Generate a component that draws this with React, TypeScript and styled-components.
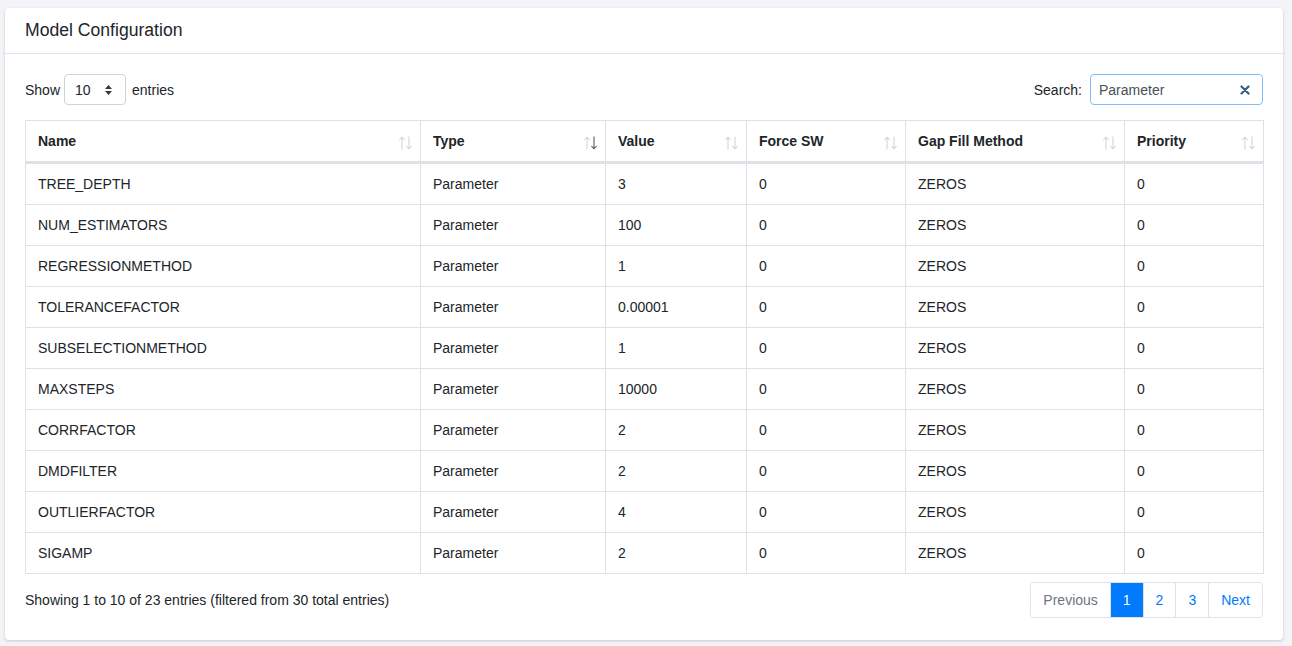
import React from "react";
import styled, { createGlobalStyle } from "styled-components";

const GlobalStyle = createGlobalStyle`
  * { box-sizing: border-box; }
  body {
    margin: 0;
    background: #f3f4f8;
    font-family: "Liberation Sans", Arial, sans-serif;
    font-size: 14px;
    color: #212529;
  }
`;

type Row = {
  name: string;
  type: string;
  value: string;
  force: string;
  gap: string;
  priority: string;
};

const rows: Row[] = [
  { name: "TREE_DEPTH", type: "Parameter", value: "3", force: "0", gap: "ZEROS", priority: "0" },
  { name: "NUM_ESTIMATORS", type: "Parameter", value: "100", force: "0", gap: "ZEROS", priority: "0" },
  { name: "REGRESSIONMETHOD", type: "Parameter", value: "1", force: "0", gap: "ZEROS", priority: "0" },
  { name: "TOLERANCEFACTOR", type: "Parameter", value: "0.00001", force: "0", gap: "ZEROS", priority: "0" },
  { name: "SUBSELECTIONMETHOD", type: "Parameter", value: "1", force: "0", gap: "ZEROS", priority: "0" },
  { name: "MAXSTEPS", type: "Parameter", value: "10000", force: "0", gap: "ZEROS", priority: "0" },
  { name: "CORRFACTOR", type: "Parameter", value: "2", force: "0", gap: "ZEROS", priority: "0" },
  { name: "DMDFILTER", type: "Parameter", value: "2", force: "0", gap: "ZEROS", priority: "0" },
  { name: "OUTLIERFACTOR", type: "Parameter", value: "4", force: "0", gap: "ZEROS", priority: "0" },
  { name: "SIGAMP", type: "Parameter", value: "2", force: "0", gap: "ZEROS", priority: "0" },
];

const columns = [
  { label: "Name", width: 395, sort: "none" },
  { label: "Type", width: 185, sort: "desc" },
  { label: "Value", width: 141, sort: "none" },
  { label: "Force SW", width: 159, sort: "none" },
  { label: "Gap Fill Method", width: 219, sort: "none" },
  { label: "Priority", width: 139, sort: "none" },
];

// pair of thin arrows used by the sortable headers
function SortArrows({ desc }: { desc?: boolean }) {
  return (
    <SortIcon width="15" height="14" viewBox="0 0 15 14">
      <path d="M4 13.5 V1.2 M1.4 3.9 L4 1.2 L6.6 3.9" stroke="#d3d6da" strokeWidth="1.1" fill="none" />
      <path
        d="M11 0.5 V12.8 M8.4 10.1 L11 12.8 L13.6 10.1"
        stroke={desc ? "#5a5d61" : "#d3d6da"}
        strokeWidth="1.1"
        fill="none"
      />
    </SortIcon>
  );
}

function App() {
  return (
    <>
      <GlobalStyle />
      <Page>
        <Card>
          <CardHeader>
            <Title>Model Configuration</Title>
          </CardHeader>
          <CardBody>
            <Controls>
              <Label>
                Show
                <Select>
                  <span>10</span>
                  <svg width="9" height="12" viewBox="0 0 9 12">
                    <path d="M4.5 1 L8 5 H1 Z" fill="#343a40" />
                    <path d="M4.5 11 L8 7 H1 Z" fill="#343a40" />
                  </svg>
                </Select>
                entries
              </Label>
              <Label>
                Search:
                <SearchBox>
                  <span>Parameter</span>
                  <svg width="10" height="10" viewBox="0 0 10 10">
                    <path d="M1.5 1.5 L8.5 8.5 M8.5 1.5 L1.5 8.5" stroke="#3e5a8a" strokeWidth="2.2" strokeLinecap="round" />
                  </svg>
                </SearchBox>
              </Label>
            </Controls>
            <Table>
              <colgroup>
                {columns.map((c) => (
                  <col key={c.label} style={{ width: c.width }} />
                ))}
              </colgroup>
              <thead>
                <tr>
                  {columns.map((c) => (
                    <Th key={c.label}>
                      {c.label}
                      <SortArrows desc={c.sort === "desc"} />
                    </Th>
                  ))}
                </tr>
              </thead>
              <tbody>
                {rows.map((r) => (
                  <tr key={r.name}>
                    <Td>{r.name}</Td>
                    <Td>{r.type}</Td>
                    <Td>{r.value}</Td>
                    <Td>{r.force}</Td>
                    <Td>{r.gap}</Td>
                    <Td>{r.priority}</Td>
                  </tr>
                ))}
              </tbody>
            </Table>
            <Footer>
              <Info>Showing 1 to 10 of 23 entries (filtered from 30 total entries)</Info>
              <Pagination>
                <PageLink $disabled>Previous</PageLink>
                <PageLink $active>1</PageLink>
                <PageLink>2</PageLink>
                <PageLink>3</PageLink>
                <PageLink>Next</PageLink>
              </Pagination>
            </Footer>
          </CardBody>
        </Card>
      </Page>
    </>
  );
}

export default App;

const Page = styled.div`
  padding: 8px 9px 7px 5px;
`;

const Card = styled.div`
  background: #fff;
  border-radius: 4px;
  box-shadow: 0 1px 3px rgba(0, 0, 0, 0.18);
`;

const CardHeader = styled.div`
  height: 46px;
  padding: 0 20px;
  display: flex;
  align-items: center;
  border-bottom: 1px solid #dee2e6;
`;

const Title = styled.h5`
  margin: 0;
  font-size: 17.6px;
  font-weight: 400;
  color: #212529;
`;

const CardBody = styled.div`
  padding: 20px 20px 22px 20px;
`;

const Controls = styled.div`
  display: flex;
  justify-content: space-between;
  align-items: center;
  height: 31px;
  margin-bottom: 15px;
`;

const Label = styled.div`
  display: flex;
  align-items: center;
  gap: 4px;
  font-size: 14px;
  color: #212529;
`;

const Select = styled.div`
  width: 62px;
  height: 31px;
  margin: 0 2px 0 0;
  padding: 0 12px 0 10px;
  border: 1px solid #ced4da;
  border-radius: 4px;
  display: flex;
  align-items: center;
  justify-content: space-between;
  font-size: 14px;
`;

const SearchBox = styled.div`
  width: 173px;
  height: 31px;
  margin-left: 4px;
  padding: 0 12px 0 8px;
  border: 1px solid #80bdff;
  border-radius: 4px;
  display: flex;
  align-items: center;
  justify-content: space-between;
  color: #495057;
  font-size: 14px;
`;

const Table = styled.table`
  width: 1238px;
  border-collapse: collapse;
  table-layout: fixed;
  border: 1px solid #dee2e6;

  tbody tr:first-child td {
    height: 42px;
  }
`;

const Th = styled.th`
  position: relative;
  height: 42px;
  padding: 0 30px 0 12px;
  text-align: left;
  font-weight: 700;
  font-size: 14px;
  border: 1px solid #dee2e6;
  border-bottom: 3px solid #dee2e6;
`;

const SortIcon = styled.svg`
  position: absolute;
  right: 7px;
  top: 15px;
`;

const Td = styled.td`
  height: 41px;
  padding: 0 12px;
  border: 1px solid #dee2e6;
  font-size: 14px;
  color: #212529;
`;

const Footer = styled.div`
  display: flex;
  justify-content: space-between;
  align-items: center;
  margin-top: 8px;
`;

const Info = styled.div`
  font-size: 14px;
  color: #212529;
`;

const Pagination = styled.div`
  display: flex;
  border: 1px solid #dee2e6;
  border-radius: 4px;
  overflow: hidden;
`;

const PageLink = styled.div<{ $active?: boolean; $disabled?: boolean }>`
  height: 34px;
  padding: 0 12px;
  display: flex;
  align-items: center;
  font-size: 14px;
  border-left: 1px solid #dee2e6;
  &:first-child { border-left: none; }
  background: ${(p) => (p.$active ? "#007bff" : "#fff")};
  color: ${(p) => (p.$active ? "#fff" : p.$disabled ? "#6c757d" : "#007bff")};
`;
